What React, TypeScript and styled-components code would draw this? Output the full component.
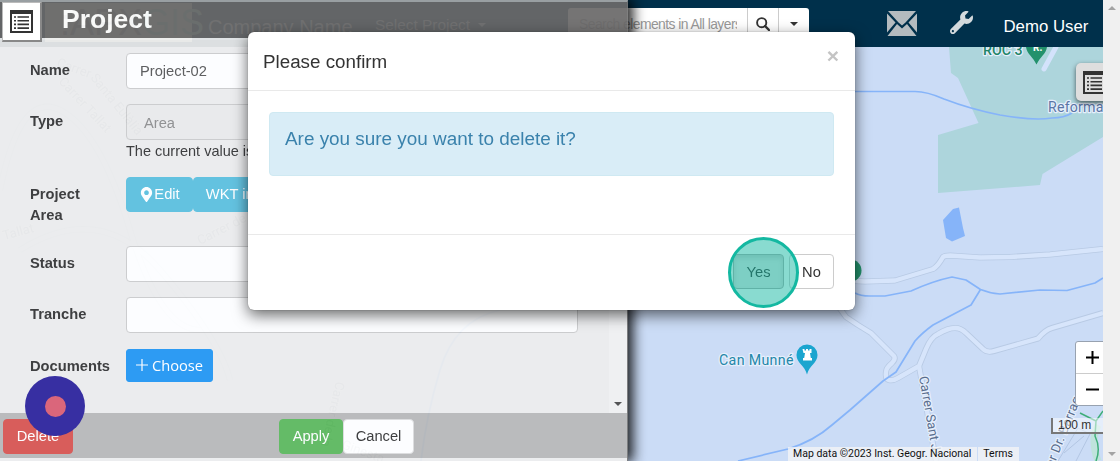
import React from 'react';
import styled, { createGlobalStyle, css } from 'styled-components';
import { FaWrench, FaMapMarkerAlt } from 'react-icons/fa';

const Global = createGlobalStyle`
  * { box-sizing: border-box; }
  body { margin: 0; overflow: hidden; font-family: "Liberation Sans", Arial, sans-serif; font-size: 14.7px; color: #333; }
`;

const Page = styled.div`
  position: relative;
  display: flex;
  width: 1120px;
  height: 461px;
  overflow: hidden;
`;
const Main = styled.main`
  display: flex;
  flex-direction: column;
  width: 1103px;
  overflow: hidden;
`;
const PageScroll = styled.div`
  display: flex;
  flex-direction: column;
  justify-content: space-between;
  align-items: center;
  width: 17px;
  padding: 6px 0 5px;
  background: #f0f0f0;
`;
const Arrow = styled.span<{ $up?: boolean; $color?: string; $w?: number }>`
  width: 0;
  height: 0;
  border: ${p => p.$w ?? 4}px solid transparent;
  ${p => p.$up
    ? css`border-top: 0; border-bottom-color: ${p.$color ?? '#a3a3a3'};`
    : css`border-bottom: 0; border-top-color: ${p.$color ?? '#a3a3a3'};`}
`;

/* Application header */
const Header = styled.header`
  display: flex;
  align-items: flex-start;
  height: 47px;
  flex: none;
  background: #00304b;
  color: #fff;
`;
const Logo = styled.div`
  display: flex;
  align-items: center;
  width: 147px;
  height: 39px;
  margin: 3px 0 0 45px;
  padding-left: 15px;
  background: #a9b3ae;
  color: #5c6462;
  font-size: 36px;
  line-height: 39px;
`;
const LogoTail = styled.span`
  color: #6ba69c;
`;
const Company = styled.span`
  width: 167px;
  margin-left: 16px;
  color: #b9c4cc;
  font-size: 20px;
  line-height: 54px;
`;
const ProjectSelect = styled.span`
  display: flex;
  align-items: center;
  gap: 8px;
  width: 193px;
  height: 50px;
  color: #b9c4cc;
  font-size: 15.4px;
`;
const SearchGroup = styled.div`
  display: flex;
  width: 241px;
  height: 32px;
  margin-top: 8px;
  border-radius: 3px 3px 0 0;
  background: #fff;
  overflow: hidden;
`;
const SearchText = styled.span`
  width: 179px;
  height: 32px;
  padding-left: 11px;
  color: #999;
  font-size: 13.9px;
  letter-spacing: -0.55px;
  line-height: 32px;
  white-space: nowrap;
  overflow: hidden;
  border-right: 10px solid #fff;
`;
const SearchButton = styled.span<{ $w: number }>`
  display: flex;
  align-items: center;
  justify-content: center;
  width: ${p => p.$w}px;
  border-left: 1px solid #ccc;
`;
const HeaderIcon = styled.span<{ $left: number; $top: number; $color: string }>`
  display: flex;
  margin: ${p => p.$top}px 0 0 ${p => p.$left}px;
  color: ${p => p.$color};
`;
const User = styled.span`
  margin-left: 30.5px;
  font-size: 16.8px;
  line-height: 53px;
  white-space: nowrap;
`;

/* Map */
const MapArea = styled.section`
  position: relative;
  flex: 1;
  background: #cbdcf6;
`;
const MapSvg = styled.svg`
  display: block;
`;
const LayerToggle = styled.div`
  position: absolute;
  left: 1076px;
  top: 16px;
  display: flex;
  align-items: center;
  width: 36px;
  height: 38px;
  padding-left: 7px;
  border-radius: 5px;
  background: #dedede;
  box-shadow: 0 2px 5px rgba(0, 0, 0, 0.6);
`;
const Zoom = styled.div`
  position: absolute;
  left: 1075px;
  top: 294px;
  display: flex;
  flex-direction: column;
  width: 36px;
  border: 1px solid #98a2b0;
  border-radius: 3px;
  background: #fff;
`;
const ZoomKey = styled.span`
  display: flex;
  align-items: center;
  height: 31px;
  padding-left: 10px;
  & + & { border-top: 1px solid #ccc; height: 32px; }
`;
const MapScale = styled.div`
  position: absolute;
  left: 1051px;
  top: 371px;
  width: 60px;
  height: 16px;
  padding-left: 5px;
  border: 2px solid #777;
  border-top: 0;
  background: rgba(255, 255, 255, 0.5);
  font: 12px/14px "Liberation Sans", sans-serif;
  white-space: nowrap;
`;
const Attribution = styled.div`
  position: absolute;
  left: 788px;
  bottom: 0;
  display: flex;
  gap: 1px;
  height: 14px;
  font: 10.5px/14px Roboto, sans-serif;
  color: #111;
  white-space: nowrap;
`;
const AttributionItem = styled.span`
  padding: 0 6px 0 5px;
  background: rgba(245, 245, 245, 0.75);
`;

/* Project panel, floats over the header and the map */
const Panel = styled.aside`
  position: absolute;
  left: 0;
  top: 0;
  display: flex;
  flex-direction: column;
  width: 628px;
  height: 461px;
  border-top: 2px solid #a5a8a9;
  border-right: 1px solid #777;
  background: #ededed;
  box-shadow: 4px 0 12px 1px rgba(0, 0, 0, 0.95);
  opacity: 0.93;
`;
const PanelTitle = styled.div`
  display: flex;
  height: 38px;
  flex: none;
  border-bottom: 2px solid #f3f3f3;
  background: #6b6a6a;
`;
const PanelIcon = styled.span`
  position: absolute;
  left: 2px;
  top: 2px;
  display: flex;
  justify-content: center;
  align-items: center;
  width: 40px;
  height: 40px;
  border: 1px solid #bbb;
  border-right: 2px solid #888;
  border-bottom: 2px solid #888;
  background: #fff;
`;
const TitleText = styled.h1`
  margin: 0 0 0 62px;
  color: #fff;
  font-size: 26.5px;
  line-height: 35px;
`;
const PanelBody = styled.div`
  display: flex;
  flex: 1;
`;
const Form = styled.div`
  flex: 1;
  padding: 13px 0 0 30px;
`;
const Field = styled.div<{ $h?: number }>`
  display: flex;
  height: ${p => p.$h ?? 51.3}px;
`;
const Label = styled.label`
  width: 96px;
  flex: none;
  padding: 7px 40px 0 0;
  font-weight: bold;
  line-height: 21px;
`;
const Control = styled.div`
  width: 452px;
`;
const Input = styled.div<{ $disabled?: boolean }>`
  height: 36px;
  padding-left: ${p => (p.$disabled ? 17 : 13)}px;
  border: 1px solid #ccc;
  border-radius: 4px;
  background: ${p => (p.$disabled ? '#ebebeb' : '#fff')};
  color: ${p => (p.$disabled ? '#8c8c8c' : '#555')};
  line-height: ${p => (p.$disabled ? 36 : 34)}px;
`;
const Help = styled.div`
  font-size: 14.5px;
  line-height: 22px;
`;
const Buttons = styled.div`
  display: flex;
`;
const Button = styled.button<{ $bg: string; $w: number; $h?: number; $dark?: boolean; $line?: string }>`
  display: flex;
  align-items: center;
  justify-content: center;
  width: ${p => p.$w}px;
  height: ${p => p.$h ?? 35}px;
  padding: 0;
  border: 1px solid ${p => p.$line ?? p.$bg};
  border-radius: 4px;
  background: ${p => p.$bg};
  color: ${p => (p.$dark ? '#333' : '#fff')};
  font: 14.7px "Liberation Sans", Arial, sans-serif;
  white-space: nowrap;
`;
const ChooseButton = styled(Button)`
  gap: 4px;
  border-radius: 3px;
  font-family: "Open Sans", sans-serif;
`;
const PanelScroll = styled.div`
  display: flex;
  justify-content: center;
  align-items: flex-end;
  width: 18px;
  padding-bottom: 7px;
  background: #f1f1f1;
`;
const PanelFooter = styled.footer`
  display: flex;
  align-items: center;
  height: 48px;
  flex: none;
  padding: 1px 0 0 3px;
  border-bottom: 3px solid #eee;
  background: #b8b8b8;
`;
const ConfirmGroup = styled.div`
  display: flex;
  margin-left: 206px;
`;
const Recorder = styled.div`
  position: absolute;
  left: 25px;
  top: 376px;
  display: flex;
  align-items: center;
  justify-content: center;
  width: 60px;
  height: 60px;
  border-radius: 50%;
  background: #372fa2;
`;
const RecorderDot = styled.span`
  width: 21px;
  height: 21px;
  border-radius: 50%;
  background: #da667b;
`;

/* Confirmation dialog */
const Dialog = styled.div`
  position: absolute;
  left: 248px;
  top: 32px;
  display: flex;
  flex-direction: column;
  width: 607px;
  height: 278px;
  border-radius: 6px;
  background: #fff;
  box-shadow: 0 5px 15px rgba(0, 0, 0, 0.6), 0 0 1px rgba(0, 0, 0, 0.5);
`;
const DialogHead = styled.div`
  display: flex;
  justify-content: space-between;
  height: 59px;
  padding: 0 16px 0 15px;
  border-bottom: 1px solid #e9e9e9;
  font-size: 18.8px;
  line-height: 59px;
`;
const Close = styled.span`
  color: #c4c4c4;
  font-size: 21px;
  font-weight: bold;
  line-height: 47px;
`;
const DialogBody = styled.div`
  flex: 1;
  padding: 21px 21px 0;
`;
const Alert = styled.div`
  height: 64px;
  padding-left: 15px;
  border: 1px solid #cfe9f2;
  border-radius: 4px;
  background: #d9edf7;
  color: #3a82ac;
  font-size: 18.9px;
  line-height: 52px;
`;
const DialogFoot = styled.div`
  display: flex;
  justify-content: flex-end;
  gap: 5px;
  height: 76px;
  padding: 19px 21px 0;
  border-top: 1px solid #e9e9e9;
`;
const YesButton = styled(Button)`
  box-shadow: inset 0 3px 5px rgba(0, 0, 0, 0.125);
`;
const ClickMark = styled.span`
  position: absolute;
  left: 479.5px;
  top: 205px;
  width: 71px;
  height: 71px;
  border: 3px solid #14b8a1;
  border-radius: 50%;
  background: rgba(20, 184, 161, 0.5);
`;

const ListIcon = ({ size = 23 }: { size?: number }) => (
  <svg width={size} height={size} viewBox="0 0 23 23">
    <rect x="1" y="1" width="21" height="21" fill="none" stroke="#333" strokeWidth="2" />
    <path d="M0 0h23v4H0z" fill="#333" />
    {[7, 10.7, 14.4, 18.1].map(y => (
      <path key={y} d={`M4 ${y}h2M7.5 ${y}h11.5`} stroke="#333" strokeWidth="1.6" />
    ))}
  </svg>
);

const Mail = () => (
  <svg width="30" height="26" viewBox="0 0 30 26" fill="currentColor">
    <path d="M1 0h28L18.500 11.500 15 14.500 11.500 11.500zM0 2.500L8.500 11.500 0 21.500zM30 2.500L21.500 11.500 30 21.500zM10 13L15 17.500 20 13 29.500 25H.5z" />
  </svg>
);

const roads = [
  'M855 281L865 281.500L895 280.500L933 269Q938 266 943 257Q945 255.500 950 255.500L980 257.500L1010 257L1050 254.500L1103 249',
  'M838 306L846 317L858 325L871 333L894 356Q896 359 892 363Q886 368 886 372Q885 379 889 380Q893 381 898 378L919 366L926 349Q931 337 938 334Q948 328 955 328Q961 328 966 333L983 349Q987 353 994 351L1038 338.500Q1045 330 1052 328L1103 313',
  'M919 366L936 461',
  'M0 190Q20 90 60 110T130 230T200 330',
  'M20 250Q100 200 160 270T230 380',
];
const streams = [
  'M855 91.500H915Q927 91.500 944 99Q970 109 1000 115Q1034 121 1052 118Q1064 118 1072 113',
  'M855 293Q860 296 870 296H885L911 291Q933 281 952 277L966 280L980.500 289.500Q989 293 1000 294L1040 290L1067 290.500L1095 283L1103 278',
  'M980.500 289.500L971 305L933 325Q922 333 915 341L896 372L883 381L850 410L832 425Q814 441 788 449L738 461',
  'M420 470Q425 420 440 370T500 310',
];

const MapDrawing = () => (
  <MapSvg width="1103" height="414" viewBox="0 47 1103 414" fontFamily="Roboto, sans-serif">
    <path d="M949 47L951 73L958 78L978.500 123L938 135V193L1040 185L1042.500 174L1103 137V47z" fill="#add5dc" />
    <path d="M1056 47L1044 69" stroke="#d3e2fb" strokeWidth="5" strokeLinecap="round" />
    <path d="M943 220L953 209L959 207.500L963 228L965 236L952 241.500L946 238z" fill="#86b4f9" />
    <g fill="none" strokeLinejoin="round">
      {roads.map(d => <path key={d} d={d} stroke="#b8cae4" strokeWidth="6" />)}
      {roads.map(d => <path key={d} d={d} stroke="#d7e5fb" strokeWidth="4.400" />)}
      {streams.map(d => <path key={d} d={d} stroke="#86b4f9" strokeWidth="1.700" />)}
      <path d="M1058 461L1078 428L1090 434L1076 461M1064 453L1084 436" stroke="#b3c6e3" />
      <path d="M1098 425Q1090 440 1098 461" stroke="#bfe3dc" strokeWidth="7" />
      <path d="M1080 413L1096 421L1103 411M1096 421L1095 436Q1101 448 1096 461" stroke="#3fae79" strokeWidth="1.500" />
    </g>
    <g stroke="#e6effc" strokeWidth="2.500" paintOrder="stroke" strokeLinejoin="round">
      <text x="983" y="55" fontSize="14.200" fontWeight="500" fill="#1f8567">ROC 3</text>
      <text x="1048" y="112" fontSize="14.200" letterSpacing="0.200" fill="#5b76a5">Reforma</text>
      <text x="719" y="365" fontSize="14.200" letterSpacing="0.350" fill="#2487a9">Can Munné</text>
      <g fontSize="13" fill="#596d8d">
        <text transform="translate(919 377) rotate(80)">Carrer Sant J</text>
        <text transform="translate(1053 468) rotate(-68)" letterSpacing="0.300">er Dr. Barraq</text>
      </g>
      <g fontSize="13" fill="#596d8d" opacity="0.55">
        <text transform="translate(56 66) rotate(20)">Carrer</text>
        <text transform="translate(90 78) rotate(51)">Santa Eulàlia</text>
        <text transform="translate(58 82) rotate(47)">Carrer Tallat</text>
        <text transform="translate(4 240) rotate(-15)">Tallat</text>
        <text transform="translate(200 245) rotate(-27)">Carrer de</text>
        <text transform="translate(336 381) rotate(103)">Carrer de la</text>
        <text transform="translate(341 448) rotate(20)">Ginesta</text>
      </g>
    </g>
    <path d="M1026 47C1027 54 1033 57 1036.500 64.500C1040 57 1046 54 1047 47z" fill="#23916c" />
    <text x="1033" y="51" fontSize="10" fontWeight="700" fill="#fff">R.</text>
    <circle cx="850.500" cy="270.500" r="11" fill="#23916c" />
    <path d="M796.500 355A10.500 10.500 0 0 1 817.500 355C817.500 363 809.500 365 807 374.500C804.500 365 796.500 363 796.500 355z" fill="#1ba5cf" />
    <path d="M802.500 349h2v1.500h1.500V349h2v1.500h1.500V349h2v4h-1.500l.8 5h1.200v2.500h-9V358h1.200l.8-5h-1.500z" fill="#fff" />
  </MapSvg>
);

export default function App() {
  return (
    <Page>
      <Global />
      <Main>
        <Header>
          <Logo>:APX<LogoTail>GIS</LogoTail></Logo>
          <Company>Company Name</Company>
          <ProjectSelect>Select Project <Arrow $color="#b9c4cc" /></ProjectSelect>
          <SearchGroup>
            <SearchText>Search elements in All layers</SearchText>
            <SearchButton $w={31}>
              <svg width="14" height="14" viewBox="0 0 14 14" fill="none" stroke="#333">
                <circle cx="5.700" cy="5.700" r="4.600" strokeWidth="1.900" />
                <path d="M9 9l4 4" strokeWidth="2.400" strokeLinecap="round" />
              </svg>
            </SearchButton>
            <SearchButton $w={31}><Arrow $color="#333" /></SearchButton>
          </SearchGroup>
          <HeaderIcon $left={78} $top={11} $color="#b4bbbf"><Mail /></HeaderIcon>
          <HeaderIcon $left={33} $top={11} $color="#d3dadd"><FaWrench size={23} /></HeaderIcon>
          <User>Demo User</User>
        </Header>
        <MapArea>
          <MapDrawing />
          <LayerToggle><ListIcon /></LayerToggle>
          <MapScale>100 m</MapScale>
          <Zoom>
            <ZoomKey><svg width="13" height="13"><path d="M0 6.500h13M6.500 0v13" stroke="#000" strokeWidth="2" /></svg></ZoomKey>
            <ZoomKey><svg width="13" height="13"><path d="M0 6.500h13" stroke="#000" strokeWidth="2" /></svg></ZoomKey>
          </Zoom>
          <Attribution>
            <AttributionItem>Map data ©2023 Inst. Geogr. Nacional</AttributionItem>
            <AttributionItem>Terms</AttributionItem>
          </Attribution>
        </MapArea>
      </Main>
      <PageScroll><Arrow $up /><Arrow /></PageScroll>

      <Panel>
        <PanelTitle>
          <TitleText>Project</TitleText>
        </PanelTitle>
        <PanelBody>
          <Form>
            <Field><Label>Name</Label><Control><Input>Project-02</Input></Control></Field>
            <Field $h={72.300}>
              <Label>Type</Label>
              <Control><Input $disabled>Area</Input><Help>The current value is not editable</Help></Control>
            </Field>
            <Field $h={69.400}>
              <Label>Project Area</Label>
              <Buttons>
                <Button $bg="#5bc0de" $w={67}><FaMapMarkerAlt size={15} />Edit</Button>
                <Button $bg="#5bc0de" $w={94}>WKT input</Button>
              </Buttons>
            </Field>
            <Field><Label>Status</Label><Control><Input /></Control></Field>
            <Field><Label>Tranche</Label><Control><Input /></Control></Field>
            <Field>
              <Label>Documents</Label>
              <ChooseButton $bg="#2196f3" $w={87} $h={33}>
                <svg width="12" height="12"><path d="M0 6h12M6 0v12" stroke="#fff" strokeWidth="1.200" /></svg>
                Choose
              </ChooseButton>
            </Field>
          </Form>
          <PanelScroll><Arrow $color="#4a4a4a" /></PanelScroll>
        </PanelBody>
        <PanelFooter>
          <Button $bg="#d9534f" $w={70}>Delete</Button>
          <ConfirmGroup>
            <Button $bg="#5cb85c" $w={64}>Apply</Button>
            <Button $bg="#fff" $w={71} $dark $line="#ddd">Cancel</Button>
          </ConfirmGroup>
        </PanelFooter>
      </Panel>
      <PanelIcon><ListIcon /></PanelIcon>
      <Recorder><RecorderDot /></Recorder>

      <Dialog>
        <DialogHead>Please confirm<Close>×</Close></DialogHead>
        <DialogBody><Alert>Are you sure you want to delete it?</Alert></DialogBody>
        <DialogFoot>
          <YesButton $bg="#e6e6e6" $w={51} $dark $line="#adadad">Yes</YesButton>
          <Button $bg="#fff" $w={45} $dark $line="#ccc">No</Button>
        </DialogFoot>
        <ClickMark />
      </Dialog>
    </Page>
  );
}
